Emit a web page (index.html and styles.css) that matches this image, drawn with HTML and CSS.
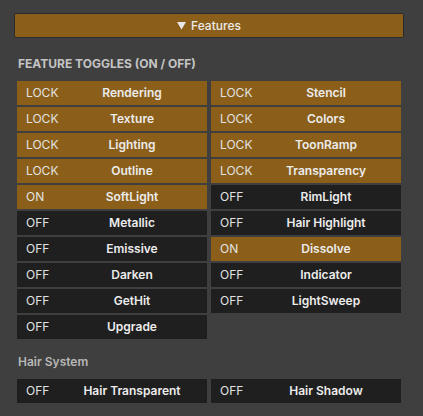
FILE: index.html
```html
<!DOCTYPE html>
<html>
<head>
<meta charset="utf-8">
<link rel="stylesheet" href="styles.css">
</head>
<body>
<div class="panel">
  <div class="header">
    <svg class="tri" width="9" height="8" viewBox="0 0 9 8"><polygon points="0,0 9,0 4.5,7.5" fill="#e8e8e8"/></svg>
    <span>Features</span>
  </div>
  <div class="section">
    <div class="title upper">FEATURE TOGGLES (ON / OFF)</div>
    <div class="grid">
      <div class="tg on"><span class="st">LOCK</span><span class="lb">Rendering</span></div>
      <div class="tg on"><span class="st">LOCK</span><span class="lb">Stencil</span></div>
      <div class="tg on"><span class="st">LOCK</span><span class="lb">Texture</span></div>
      <div class="tg on"><span class="st">LOCK</span><span class="lb">Colors</span></div>
      <div class="tg on"><span class="st">LOCK</span><span class="lb">Lighting</span></div>
      <div class="tg on"><span class="st">LOCK</span><span class="lb">ToonRamp</span></div>
      <div class="tg on"><span class="st">LOCK</span><span class="lb">Outline</span></div>
      <div class="tg on"><span class="st">LOCK</span><span class="lb">Transparency</span></div>
      <div class="tg on"><span class="st">ON</span><span class="lb">SoftLight</span></div>
      <div class="tg"><span class="st">OFF</span><span class="lb">RimLight</span></div>
      <div class="tg"><span class="st">OFF</span><span class="lb">Metallic</span></div>
      <div class="tg"><span class="st">OFF</span><span class="lb">Hair Highlight</span></div>
      <div class="tg"><span class="st">OFF</span><span class="lb">Emissive</span></div>
      <div class="tg on"><span class="st">ON</span><span class="lb">Dissolve</span></div>
      <div class="tg"><span class="st">OFF</span><span class="lb">Darken</span></div>
      <div class="tg"><span class="st">OFF</span><span class="lb">Indicator</span></div>
      <div class="tg"><span class="st">OFF</span><span class="lb">GetHit</span></div>
      <div class="tg"><span class="st">OFF</span><span class="lb">LightSweep</span></div>
      <div class="tg"><span class="st">OFF</span><span class="lb">Upgrade</span></div>
    </div>
    <div class="title hair">Hair System</div>
    <div class="grid">
      <div class="tg"><span class="st">OFF</span><span class="lb">Hair Transparent</span></div>
      <div class="tg"><span class="st">OFF</span><span class="lb">Hair Shadow</span></div>
    </div>
  </div>
</div>
</body>
</html>
```
FILE: styles.css
```css
html, body {
  margin: 0;
  padding: 0;
  background: #3f3f3f;
}
body {
  font-family: Inter, "Noto Sans", "Liberation Sans", sans-serif;
  font-size: 12px;
  width: 423px;
  height: 416px;
  overflow: hidden;
}
.panel {
  padding: 13px 19px 0 14px;
}
.header {
  box-sizing: border-box;
  height: 25px;
  background: #8b5f1a;
  border: 1px solid #2c2c2c;
  border-radius: 2px;
  display: flex;
  align-items: center;
  justify-content: center;
  gap: 5px;
  color: #eaeaea;
  font-size: 12px;
  font-weight: 500;
}
.header .tri {
  display: block;
  margin-top: 1px;
}
.section {
  padding: 0 3px;
}
.title {
  height: 16px;
  line-height: 16px;
  font-weight: 700;
  color: #c4c4c4;
  padding-left: 1px;
  margin-bottom: 9px;
}
.title.upper {
  margin-top: 18px;
}
.title.hair {
  margin-top: 15px;
  font-weight: 600;
  color: #b8b8b8;
}
.grid {
  display: grid;
  grid-template-columns: 190px 190px;
  column-gap: 4px;
  row-gap: 2px;
}
.tg {
  height: 24px;
  line-height: 24px;
  background: #1f1f1f;
  display: flex;
  color: #ececec;
}
.tg.on {
  background: #8b5f1a;
}
.st {
  width: 31px;
  padding-left: 9px;
  color: #e2e2e2;
  font-weight: 400;
}
.lb {
  flex: 1;
  text-align: center;
  font-weight: 600;
}
```
